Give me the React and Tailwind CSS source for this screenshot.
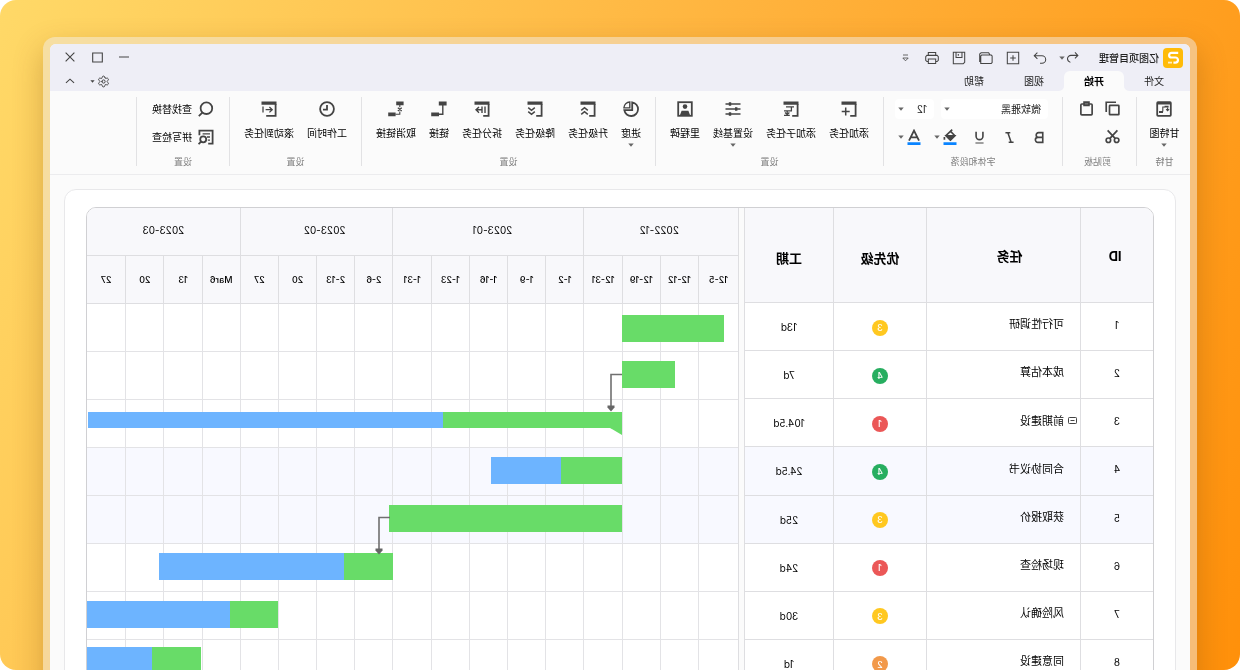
import { Settings } from "lucide-react"

const GANTT_WIDTH = 652

const tasks = [
  { id: 1, name: "可行性调研", priority: 3, duration: "13d" },
  { id: 2, name: "成本估算", priority: 4, duration: "7d" },
  { id: 3, name: "前期建设", priority: 1, duration: "104.5d", isParent: true },
  { id: 4, name: "合同协议书", priority: 4, duration: "24.5d", selected: true },
  { id: 5, name: "获取报价", priority: 3, duration: "25d", selected: true },
  { id: 6, name: "现场检查", priority: 1, duration: "24d" },
  { id: 7, name: "风险确认", priority: 3, duration: "30d" },
  { id: 8, name: "同意建设", priority: 2, duration: "1d" },
]

const priorityColors = {
  1: "bg-[#eb5757]",
  2: "bg-[#f2994a]",
  3: "bg-[#ffc820]",
  4: "bg-[#27ae60]",
}

const months = [
  { label: "2022-12", span: 4, className: "pl-1" },
  { label: "2023-01", span: 5, className: "pr-2" },
  { label: "2023-02", span: 4, className: "pr-4" },
  { label: "2023-03", span: 4, className: "" },
]

const weeks = [
  "12-5", "12-12", "12-19", "12-31",
  "1-2", "1-9", "1-16", "1-23", "1-31",
  "2-6", "2-13", "20", "27",
  "Mar6", "13", "20", "27",
]

// start / done / end are measured on the 652 unit time axis
const bars = [
  { id: 1, start: 14, done: 116, end: 116, top: 11 },
  { id: 2, start: 63, done: 116, end: 116, top: 57 },
  { id: 3, start: 116, done: 295, end: 651, top: 108, summary: true },
  { id: 4, start: 116, done: 177, end: 247, top: 153 },
  { id: 5, start: 116, done: 350, end: 350, top: 201 },
  { id: 6, start: 346, done: 395, end: 580, top: 249 },
  { id: 7, start: 461, done: 509, end: 652, top: 297 },
  { id: 8, start: 538, done: 587, end: 652, top: 343 },
]

const links = [
  { from: 116, top: 69 },
  { from: 349, top: 212 },
]

const pct = (value) => `${(value / GANTT_WIDTH) * 100}%`

const Svg = ({ size = 16, width = 1.8, children }) => (
  <svg width={size} height={size} viewBox="0 0 16 16" fill="none" stroke="currentColor" strokeWidth={width} aria-hidden="true">
    {children}
  </svg>
)

const Caret = ({ className = "" }) => (
  <svg width="6" height="4" viewBox="0 0 6 4" className={`text-[#666] ${className}`} aria-hidden="true">
    <path d="M0.3 0.4h5.4L3 3.7z" fill="currentColor" />
  </svg>
)

const TaskFrame = ({ children }) => (
  <Svg>
    <path d="M0.5 0.5h15v3.2h-15z" fill="currentColor" stroke="none" />
    <path d="M1.4 3v11.8h5.4" />
    {children}
  </Svg>
)

const icons = {
  gantt: (
    <Svg>
      <rect x="1.2" y="1.2" width="13.6" height="13.6" rx="0.8" />
      <path d="M1 2.2h14" strokeWidth="2.4" />
      <path d="M3.4 5.6h4M9 11h4" strokeWidth="1.8" />
      <path d="M7 6h2.2v4.6M4.4 6.4V9M2.9 8.2l1.5 1.6 1.5-1.6" strokeWidth="1.1" />
    </Svg>
  ),
  addTask: (
    <TaskFrame>
      <path d="M11.3 6.6v8M7.3 10.6h8" strokeWidth="1.5" />
    </TaskFrame>
  ),
  addSubtask: (
    <TaskFrame>
      <path d="M5 5.9h8M7.6 5.9v3.9h7.4M11.8 9.8v4M9.2 14.4h5.8M9.6 11.4l2.2 2 2.2-2" strokeWidth="1.3" />
    </TaskFrame>
  ),
  baseline: (
    <Svg width={1.5}>
      <path d="M0.5 3h15M0.5 8h15M0.5 13h15" />
      <path d="M9.8 1.2h2.4v3.6H9.8zM3.6 6.2H6v3.6H3.6zM9.8 11.2h2.4v3.6H9.8z" fill="currentColor" stroke="none" />
    </Svg>
  ),
  milestone: (
    <Svg>
      <rect x="1.2" y="1.2" width="13.6" height="13.6" />
      <circle cx="8" cy="5.6" r="2.3" fill="currentColor" stroke="none" />
      <path d="M3 14l1.6-4.2h6.8L13 14z" fill="currentColor" stroke="none" />
    </Svg>
  ),
  progress: (
    <Svg>
      <path d="M6.8 1.3a6.9 6.9 0 1 0 7.9 7.9H6.8z" />
      <path d="M9.2 1v5.9h5.9A6.3 6.3 0 0 0 9.2 1z" strokeWidth="1.4" />
    </Svg>
  ),
  upgrade: (
    <TaskFrame>
      <path d="M8.2 9.4l3.3-2.7 3.3 2.7M8.2 13.4l3.3-2.7 3.3 2.7" strokeWidth="1.5" />
    </TaskFrame>
  ),
  downgrade: (
    <TaskFrame>
      <path d="M8.2 6.6l3.3 2.7 3.3-2.7M8.2 10.6l3.3 2.7 3.3-2.7" strokeWidth="1.5" />
    </TaskFrame>
  ),
  split: (
    <TaskFrame>
      <path d="M5 5.5v6.6M8 5.5v6.6M8 8.8h6M11 5.9l3 2.9-3 2.9" strokeWidth="1.4" />
    </TaskFrame>
  ),
  link: (
    <Svg>
      <path d="M0.4 0.6h7.8v3.8H0.4zM8 11.4h7.8v3.8H8z" fill="currentColor" stroke="none" />
      <path d="M4.2 4v9.3h4.4" strokeWidth="1.4" />
    </Svg>
  ),
  unlink: (
    <Svg>
      <path d="M0.4 0.6h7.4v3.6H0.4zM8.4 11.6h7.4v3.6H8.4z" fill="currentColor" stroke="none" />
      <path d="M4.2 4v2.2M4.2 10.4v2.9h4.4M2.2 6.8l4 3.2M2.2 10l4-3.2" strokeWidth="1.1" />
    </Svg>
  ),
  clock: (
    <Svg>
      <circle cx="8" cy="8" r="6.9" />
      <path d="M8 4v4.6h4" />
    </Svg>
  ),
  scrollTo: (
    <Svg>
      <path d="M0.5 0.5h15v3.2h-15z" fill="currentColor" stroke="none" />
      <path d="M1.4 3v11.8h9.4" />
      <path d="M11.4 8.7H4.8M7.6 6L4.8 8.7l2.8 2.7M14 5.4v6.2" strokeWidth="1.3" />
    </Svg>
  ),
  search: (
    <Svg>
      <circle cx="7.6" cy="7.2" r="5.8" />
      <path d="M11.4 11.4l3.8 3.8" />
    </Svg>
  ),
  spell: (
    <Svg>
      <path d="M5.8 14.6H1.4V1.6h13.2v4.6" />
      <path d="M4 4.8h7.4M4 8h3M4 11.2h2.2" strokeWidth="1.3" />
      <circle cx="10.8" cy="10.3" r="3" />
      <path d="M13 12.6l2.4 2.6" />
    </Svg>
  ),
  copy: (
    <Svg size={15}>
      <path d="M4.3 1.3h10.4v10.3" />
      <rect x="1.2" y="4.6" width="10" height="10" rx="0.6" />
    </Svg>
  ),
  paste: (
    <Svg size={15}>
      <rect x="2" y="3.2" width="12" height="11.6" rx="1" />
      <path d="M5.4 1.2h5.2v3.4H5.4z" />
    </Svg>
  ),
  cut: (
    <Svg size={15}>
      <circle cx="3.6" cy="12" r="2.4" />
      <circle cx="12.4" cy="12" r="2.4" />
      <path d="M2.8 1.4l8.2 8.8M13.2 1.4L5 10.2" />
    </Svg>
  ),
}

const groups = [
  {
    name: "设置",
    items: [
      { icon: "addTask", label: "添加任务" },
      { icon: "addSubtask", label: "添加子任务" },
      { icon: "baseline", label: "设置基线", menu: true },
      { icon: "milestone", label: "里程碑" },
    ],
  },
  {
    name: "设置",
    items: [
      { icon: "progress", label: "进度", menu: true },
      { icon: "upgrade", label: "升级任务" },
      { icon: "downgrade", label: "降级任务" },
      { icon: "split", label: "拆分任务" },
      { icon: "link", label: "链接" },
      { icon: "unlink", label: "取消链接" },
    ],
  },
  {
    name: "设置",
    items: [
      { icon: "clock", label: "工作时间" },
      { icon: "scrollTo", label: "滚动到任务" },
    ],
  },
]

const quickActions = [
  {
    label: "重做",
    icon: <path d="M11 1.8l3.6 3.6L11 9M14 5.4H5.8a4.3 4.3 0 0 0 0 8.6H8" />,
  },
  {
    label: "新建",
    icon: <path d="M1.5 1.5h13v13h-13zM8 4.8v6.4M4.8 8h6.4" />,
  },
  {
    label: "打开",
    icon: <path d="M1 13.2V5.6l1-1h11l1 1v8.6H2zM3.4 4.6L5 2h8.6l1.6 1.4v9.2" />,
  },
  {
    label: "保存",
    icon: <path d="M1.5 1.5h13v13H3.2l-1.7-1.6zM4.6 1.5v6h6.8v-6M8.8 3.4v2" />,
  },
  {
    label: "打印",
    icon: <path d="M3.8 5V1.8h8.4V5M3.8 12H2.2L0.8 10.6V6.4L2.2 5h11.6l1.4 1.4v4.2L13.8 12h-1.6M3.8 9.2h8.4v5H3.8z" />,
  },
]

const RibbonButton = ({ item }) => (
  <button type="button" className="flex flex-col items-center text-[10px] leading-4 text-black">
    <span className="text-[#444]">{icons[item.icon]}</span>
    <span className="mt-2 whitespace-nowrap">{item.label}</span>
    {item.menu && <Caret className="mt-0.5" />}
  </button>
)

const RibbonGroup = ({ name, className, children }) => (
  <section className={`flex h-[69px] shrink-0 flex-col border-r border-[#e2e2e4] pt-1 ${className}`}>
    {children}
    <div className="mt-auto text-center text-[9px] leading-2 text-[#808080]">{name}</div>
  </section>
)

const TitleBar = () => (
  <header className="bg-[#eeeef6] text-[#444]">
    <div className="flex h-[27px] items-center pl-[7px] pr-[7px]">
      <svg width="20" height="20" viewBox="0 0 20 20" aria-hidden="true">
        <rect width="20" height="20" rx="4" fill="#ffbb08" />
        <path d="M4.8 4.8h6.8a2.3 2.3 0 0 1 2.3 2.4c0 1.4-1 2.3-2.3 2.3h-4a2.5 2.5 0 0 0 0 5.1h2" fill="none" stroke="#fff" strokeWidth="2.2" />
        <path d="M11 14.6h4" stroke="#fff" strokeWidth="1.8" opacity=".75" />
      </svg>
      <h1 className="ml-1 text-[10px] leading-4 font-medium text-[#222]">亿图项目管理</h1>
      <button type="button" aria-label="撤销" className="ml-5 flex items-center gap-px">
        <Svg size={13} width={1.3}>
          <path d="M5 1.8L1.4 5.4 5 9M2 5.4h7.8A4.3 4.3 0 0 1 14.2 9.6c0 2.2-1.4 3.6-3.6 4.4" />
        </Svg>
        <Caret />
      </button>
      <div className="ml-[5px] flex">
        {quickActions.map((action) => (
          <button key={action.label} type="button" aria-label={action.label} className="flex w-[27px] justify-center">
            <Svg size={14} width={1.2}>{action.icon}</Svg>
          </button>
        ))}
        <button type="button" aria-label="更多" className="flex w-[27px] items-center justify-center">
          <svg width="7" height="8" viewBox="0 0 7 8" fill="none" stroke="currentColor" aria-hidden="true">
            <path d="M1 1h5M0.8 4h5.4L3.5 6.8z" strokeWidth="0.8" />
          </svg>
        </button>
      </div>
      <div className="ml-auto flex">
        <button type="button" aria-label="最小化" className="flex w-[27px] justify-center">
          <Svg size={10} width={1.6}><path d="M0 8h16" /></Svg>
        </button>
        <button type="button" aria-label="最大化" className="flex w-[27px] justify-center">
          <Svg size={11} width={1.6}><path d="M1 1.5h14v13H1z" /></Svg>
        </button>
        <button type="button" aria-label="关闭" className="flex w-[27px] justify-center">
          <Svg size={10} width={1.8}><path d="M1 1l14 14M15 1L1 15" /></Svg>
        </button>
      </div>
    </div>
    <div className="flex h-5 items-center pl-1.5 pr-[7px]">
      <nav className="flex h-full text-[10px] text-[#222]">
        <button type="button" className="w-[60px]">文件</button>
        <button type="button" className="relative w-[60px] rounded-t-md bg-[#fbfbfb] font-bold text-black">
          开始
          <svg width="5" height="5" viewBox="0 0 5 5" className="absolute -left-[5px] bottom-0" aria-hidden="true">
            <path d="M5 0v5H0a5 5 0 0 0 5-5z" fill="#fbfbfb" />
          </svg>
          <svg width="5" height="5" viewBox="0 0 5 5" className="absolute -right-[5px] bottom-0" aria-hidden="true">
            <path d="M0 0v5h5a5 5 0 0 1-5-5z" fill="#fbfbfb" />
          </svg>
        </button>
        <button type="button" className="w-[60px]">视图</button>
        <button type="button" className="w-[60px]">帮助</button>
      </nav>
      <button type="button" aria-label="设置" className="ml-auto flex items-center gap-0.5">
        <Settings size={13} strokeWidth={1.8} />
        <svg width="5" height="3" viewBox="0 0 5 3" aria-hidden="true">
          <path d="M0.4 0.2h4.2L2.5 2.8z" fill="currentColor" />
        </svg>
      </button>
      <button type="button" aria-label="收起功能区" className="ml-1.5 flex w-[27px] justify-center">
        <Svg size={10} width={1.7}><path d="M1.5 11L8 5l6.5 6" /></Svg>
      </button>
    </div>
  </header>
)

const Ribbon = () => (
  <div className="flex h-21 border-b border-[#ececee] bg-[#fbfbfb] pt-1.5">
    <RibbonGroup name="甘特" className="w-[54px] pl-2.5 pr-3">
      <RibbonButton item={{ icon: "gantt", label: "甘特图", menu: true }} />
    </RibbonGroup>

    <RibbonGroup name="剪贴板" className="w-[74px] pl-4 pr-3">
      <div className="grid grid-cols-[16px_16px] gap-x-2.5 gap-y-[13px] text-[#444]">
        <button type="button" aria-label="复制">{icons.copy}</button>
        <button type="button" aria-label="粘贴">{icons.paste}</button>
        <button type="button" aria-label="剪切">{icons.cut}</button>
      </div>
    </RibbonGroup>

    <RibbonGroup name="字体和段落" className="w-[179px] px-3.5">
      <div className="-mt-0.5 flex gap-[7px] text-[10px] text-[#222]">
        <div className="relative">
          <select aria-label="字体" className="h-5 w-[107px] appearance-none rounded bg-white pl-[7px]" defaultValue="微软雅黑">
            <option>微软雅黑</option>
            <option>宋体</option>
          </select>
          <Caret className="pointer-events-none absolute right-[3px] top-2" />
        </div>
        <div className="relative">
          <select aria-label="字号" className="h-5 w-[39px] appearance-none rounded bg-white pl-[7px]" defaultValue="12">
            <option>12</option>
            <option>14</option>
          </select>
          <Caret className="pointer-events-none absolute right-[3px] top-2" />
        </div>
      </div>
      <div className="mt-2.5 flex h-4 items-center text-[#444]">
        <button type="button" aria-label="加粗" className="flex w-4 justify-center">
          <Svg size={13} width={2}><path d="M4 2h5.2a2.9 2.9 0 0 1 0 5.8H4zM4 7.8h6a3.1 3.1 0 0 1 0 6.2H4z" /></Svg>
        </button>
        <button type="button" aria-label="斜体" className="ml-3.5 flex w-4 justify-center">
          <Svg size={13} width={1.9}><path d="M7 2.2h6M3 13.8h6M10 2.2L6 13.8" /></Svg>
        </button>
        <button type="button" aria-label="下划线" className="ml-3.5 flex w-4 justify-center">
          <Svg size={13} width={2}><path d="M3.8 1v5.4a4.2 4.2 0 0 0 8.4 0V1" /><path d="M3 14.8h10" strokeWidth="1.4" /></Svg>
        </button>
        <button type="button" aria-label="填充颜色" className="ml-3.5 flex items-center gap-0.5">
          <svg width="16" height="16" viewBox="0 0 16 16" fill="none" stroke="currentColor" strokeWidth="1.6" aria-hidden="true">
            <path d="M7.6 2.2L12 6.6 7.6 11 3.2 6.8zM5.8 0.6l3 3" />
            <path d="M3.4 6.8h8.4L7.6 11z" fill="currentColor" />
            <path d="M13.6 8v2.8" strokeWidth="1.7" />
            <path d="M1.5 14.6h13" stroke="#0a84ff" strokeWidth="2.8" />
          </svg>
          <Caret />
        </button>
        <button type="button" aria-label="字体颜色" className="ml-3 flex items-center gap-0.5">
          <svg width="16" height="16" viewBox="0 0 16 16" fill="none" stroke="currentColor" strokeWidth="1.8" aria-hidden="true">
            <path d="M3 11.6L8 1.6l5 10M4.8 8.4h6.4" />
            <path d="M1.5 14.6h13" stroke="#0a84ff" strokeWidth="2.8" />
          </svg>
          <Caret />
        </button>
      </div>
    </RibbonGroup>

    {groups.map((group, index) => (
      <RibbonGroup key={index} name={group.name} className="px-3.5">
        <div className="flex items-start gap-[13px]">
          {group.items.map((item) => (
            <RibbonButton key={item.label} item={item} />
          ))}
        </div>
      </RibbonGroup>
    ))}

    <RibbonGroup name="设置" className="px-[15px]">
      <div className="flex flex-col gap-3 text-[10px] leading-4 text-black">
        <button type="button" className="flex items-center gap-1.5">
          <span className="text-[#444]">{icons.search}</span>
          查找替换
        </button>
        <button type="button" className="flex items-center gap-1.5">
          <span className="text-[#444]">{icons.spell}</span>
          拼写检查
        </button>
      </div>
    </RibbonGroup>
  </div>
)

const TaskTable = () => (
  <table className="w-[409px] shrink-0 table-fixed border-separate border-spacing-0 text-black">
    <thead>
      <tr className="h-[95px] bg-[#f8f8fb] text-[13px] [&>th]:border-b [&>th]:border-r [&>th]:border-[#dedee1] [&>th]:font-bold">
        <th scope="col" className="w-[73px] pl-1 pt-1">ID</th>
        <th scope="col" className="w-[154px] pr-3 pt-1">任务</th>
        <th scope="col" className="w-[93px] pt-2">优先级</th>
        <th scope="col" className="w-[89px] pt-2">工期</th>
      </tr>
    </thead>
    <tbody>
      {tasks.map((task) => (
        <tr
          key={task.id}
          className={`h-12 text-center text-[10px] [&>td]:border-b [&>td]:border-r [&>td]:border-[#dedee1] ${task.selected ? "bg-[#f8f9ff]" : "bg-white"}`}
        >
          <td className="pb-0.5">{task.id}</td>
          <td className="pb-1 text-left text-[11px]">
            <div className={`flex items-center ${task.isParent ? "gap-1 pl-[3px]" : "pl-4"}`}>
              {task.isParent && (
                <button type="button" aria-label="折叠">
                  <svg width="9" height="7" viewBox="0 0 9 7" fill="none" stroke="#444" aria-hidden="true">
                    <rect x="0.5" y="0.5" width="8" height="6" rx="0.8" />
                    <path d="M2.5 3.5h4" />
                  </svg>
                </button>
              )}
              {task.name}
            </div>
          </td>
          <td className="pt-0.5">
            <span className={`mx-auto flex size-4 items-center justify-center rounded-full text-[9px] font-medium text-white ${priorityColors[task.priority]}`}>
              {task.priority}
            </span>
          </td>
          <td className="pt-0.5">{task.duration}</td>
        </tr>
      ))}
    </tbody>
  </table>
)

const GanttChart = () => (
  <div className="relative min-w-0 flex-1">
    <table className="w-full table-fixed border-separate border-spacing-0 text-black">
      <colgroup>
        {weeks.map((_, i) => (
          <col key={i} className={i === 0 ? "w-10" : ""} />
        ))}
      </colgroup>
      <thead className="bg-[#f8f8fb]">
        <tr className="h-12 text-[10px]">
          {months.map((month) => (
            <th
              key={month.label}
              scope="colgroup"
              colSpan={month.span}
              className={`border-b border-r border-[#dedee1] pb-0.5 font-normal last:border-r-0 ${month.className}`}
            >
              {month.label}
            </th>
          ))}
        </tr>
        <tr className="h-12 text-[9px]">
          {weeks.map((week, i) => (
            <th key={i} scope="col" className="border-b border-r border-[#dedee1] p-0 font-medium last:border-r-0">
              {week}
            </th>
          ))}
        </tr>
      </thead>
      <tbody>
        {tasks.map((task) => (
          <tr key={task.id} className={`h-12 ${task.selected ? "bg-[#f8f9ff]" : "bg-white"}`}>
            {weeks.map((_, i) => (
              <td key={i} className="border-b border-r border-[#e3e3e6] p-0 last:border-r-0" />
            ))}
          </tr>
        ))}
      </tbody>
    </table>

    <div className="absolute inset-x-0 bottom-0 top-24">
      {bars.map((bar) => (
        <div
          key={bar.id}
          className={`absolute flex ${bar.summary ? "h-4" : "h-[27px]"}`}
          style={{ left: pct(bar.start), width: pct(bar.end - bar.start), top: bar.top }}
        >
          <div className="bg-[#68dc68]" style={{ width: `${((bar.done - bar.start) / (bar.end - bar.start)) * 100}%` }} />
          <div className="flex-1 bg-[#6db4ff]" />
          {bar.summary && (
            <svg width="12" height="7" viewBox="0 0 12 7" className="absolute left-0 top-full" aria-hidden="true">
              <path d="M0 0h12L0 7z" fill="#68dc68" />
            </svg>
          )}
        </div>
      ))}
      {links.map((link) => (
        <svg
          key={link.from}
          width="16"
          height="40"
          viewBox="0 0 16 40"
          className="absolute"
          style={{ left: pct(link.from), top: link.top }}
          aria-hidden="true"
        >
          <path d="M0 1.5h11v32" fill="none" stroke="#707070" strokeWidth="1.6" />
          <path d="M7.5 32.5h7v2L11 38.5l-3.5-4z" fill="#666" />
        </svg>
      ))}
    </div>
  </div>
)

const App = () => {
  return (
    <div className="h-screen -scale-x-100 overflow-hidden rounded-2xl bg-[linear-gradient(245deg,#ffd968,#ffb23c_50%,#ff900a)] px-[43px] pt-[37px] font-['Inter','Noto_Sans_CJK_SC',sans-serif]">
      <div className="rounded-xl bg-[#ede8e2]/50 p-[7px] shadow-[0_12px_30px_rgba(120,70,10,0.3)]">
        <main className="overflow-hidden rounded-md bg-[#fbfbfb]">
          <TitleBar />
          <Ribbon />
          <div className="px-3.5 pt-3.5">
            <div className="rounded-xl border border-[#e8e8ea] bg-white px-[21px] pt-[17px]">
              <div className="flex overflow-hidden rounded-t-[10px] border border-[#d0d0d3]">
                <TaskTable />
                <div className="w-1.5 shrink-0 border-r border-[#dedee1] bg-[#fbfbfb]" />
                <GanttChart />
              </div>
            </div>
          </div>
        </main>
      </div>
    </div>
  )
}

export default App
